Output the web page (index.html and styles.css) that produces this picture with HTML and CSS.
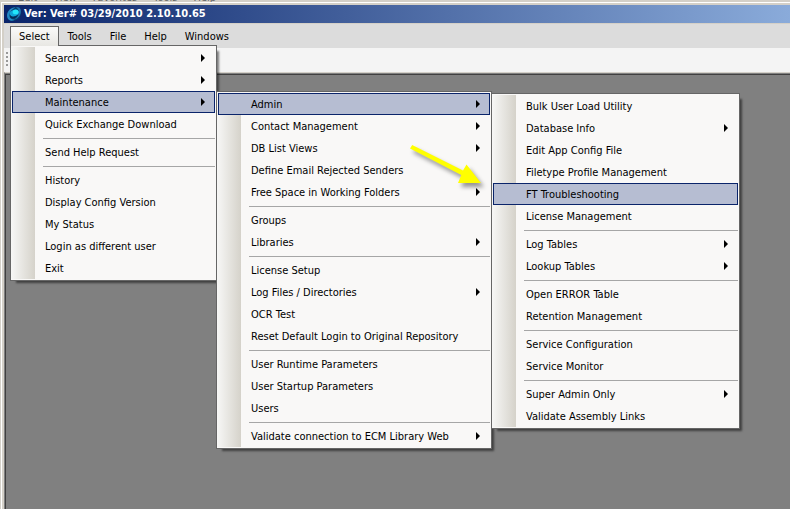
FILE: index.html
```html
<!DOCTYPE html>
<html lang="en">
<head>
<meta charset="utf-8">
<title>Ver: Ver# 03/29/2010 2.10.10.65</title>
<link rel="stylesheet" href="styles.css">
</head>
<body>
<div class="backdrop" aria-hidden="true"><span>Edit</span><span>View</span><span>Favorites</span><span>Tools</span><span>Help</span></div>
<div class="window">
  <header class="titlebar">
    <svg class="logo" viewBox="0 0 16 16" aria-hidden="true">
      <path d="M2 12C-0.500 7 4 1 10 1C8 2 15 0 15 5C16 10 12 15 6 15C4 15 2.500 14 2 12Z" fill="#08406f"/>
      <path d="M1.500 12C-0.500 7 4 1.500 9.500 1.300C5.500 3.500 3.200 6.500 3.500 10C3.800 12.500 6 14 9 13.500C6 15.500 3 15 1.500 12Z" fill="#2389c4"/>
      <path d="M10 1.500C13 0.500 15.200 2 14.800 6C14.500 9.500 12 12.500 8.500 13.500C11.500 11 13 8.500 13 6C13 4 12 2.500 10 1.500Z" fill="#1f78b4"/>
      <ellipse cx="8.300" cy="7" rx="4.600" ry="3.300" transform="rotate(-20 8.300 7)" fill="#0fa5d8"/>
      <ellipse cx="9.600" cy="6" rx="3" ry="2.300" fill="#22e6fa"/>
      <path d="M4 9.500C6 11.500 9.500 11 12 8.500C11 12 6.500 13.500 4.500 11.500Z" fill="#052a55"/>
    </svg>
    <h1 class="title">Ver: Ver# 03/29/2010 2.10.10.65</h1>
  </header>
  <nav class="menubar">
    <div class="slot">
      <button class="top open" type="button">Select</button>
      <ul class="menu menu-select">
        <li><button class="item sub" type="button">Search</button></li>
        <li><button class="item sub" type="button">Reports</button></li>
        <li class="parent"><button class="item sub active" type="button">Maintenance</button>
          <ul class="menu menu-maintenance">
            <li class="parent"><button class="item sub active" type="button">Admin</button>
              <ul class="menu menu-admin">
                <li><button class="item" type="button">Bulk User Load Utility</button></li>
                <li><button class="item sub" type="button">Database Info</button></li>
                <li><button class="item" type="button">Edit App Config File</button></li>
                <li><button class="item" type="button">Filetype Profile Management</button></li>
                <li><button class="item active" type="button">FT Troubleshooting</button></li>
                <li><button class="item" type="button">License Management</button></li>
                <li class="rule" role="separator"></li>
                <li><button class="item sub" type="button">Log Tables</button></li>
                <li><button class="item sub" type="button">Lookup Tables</button></li>
                <li class="rule" role="separator"></li>
                <li><button class="item" type="button">Open ERROR Table</button></li>
                <li><button class="item" type="button">Retention Management</button></li>
                <li class="rule" role="separator"></li>
                <li><button class="item" type="button">Service Configuration</button></li>
                <li><button class="item" type="button">Service Monitor</button></li>
                <li class="rule" role="separator"></li>
                <li><button class="item sub" type="button">Super Admin Only</button></li>
                <li><button class="item" type="button">Validate Assembly Links</button></li>
              </ul>
            </li>
            <li><button class="item sub" type="button">Contact Management</button></li>
            <li><button class="item sub" type="button">DB List Views</button></li>
            <li><button class="item" type="button">Define Email Rejected Senders</button></li>
            <li class="parent"><button class="item sub" type="button">Free Space in Working Folders</button>
              <svg class="pointer" viewBox="0 0 90 60" aria-hidden="true">
                <path d="M8.200 5L59 30.500L62.500 24.500L77 43L54 43L57.300 35L6 8.500Z" fill="#ffff00"/>
              </svg>
            </li>
            <li class="rule" role="separator"></li>
            <li><button class="item" type="button">Groups</button></li>
            <li><button class="item sub" type="button">Libraries</button></li>
            <li class="rule" role="separator"></li>
            <li><button class="item" type="button">License Setup</button></li>
            <li><button class="item sub" type="button">Log Files / Directories</button></li>
            <li><button class="item" type="button">OCR Test</button></li>
            <li><button class="item" type="button">Reset Default Login to Original Repository</button></li>
            <li class="rule" role="separator"></li>
            <li><button class="item" type="button">User Runtime Parameters</button></li>
            <li><button class="item" type="button">User Startup Parameters</button></li>
            <li><button class="item" type="button">Users</button></li>
            <li class="rule" role="separator"></li>
            <li><button class="item sub" type="button">Validate connection to ECM Library Web</button></li>
          </ul>
        </li>
        <li><button class="item" type="button">Quick Exchange Download</button></li>
        <li class="rule" role="separator"></li>
        <li><button class="item" type="button">Send Help Request</button></li>
        <li class="rule" role="separator"></li>
        <li><button class="item" type="button">History</button></li>
        <li><button class="item" type="button">Display Config Version</button></li>
        <li><button class="item" type="button">My Status</button></li>
        <li><button class="item" type="button">Login as different user</button></li>
        <li><button class="item" type="button">Exit</button></li>
      </ul>
    </div>
    <button class="top" type="button">Tools</button>
    <button class="top" type="button">File</button>
    <button class="top" type="button">Help</button>
    <button class="top" type="button">Windows</button>
  </nav>
  <div class="toolbar"><span class="grip"></span></div>
  <main class="workspace"></main>
</div>
</body>
</html>
```
FILE: styles.css
```css
* { box-sizing: border-box; }

body {
  margin: 0;
  min-height: 100vh;
  display: flex;
  flex-direction: column;
  overflow: hidden;
  background: #d4d0c8;
  font: 11px/14px Tahoma, "DejaVu Sans Condensed", "DejaVu Sans", sans-serif;
  color: #000;
}

button {
  font: inherit;
  color: inherit;
  border: 0;
  margin: 0;
  border-radius: 0;
  background: none;
  white-space: nowrap;
}

.backdrop {
  display: flex;
  align-items: flex-end;
  gap: 16px;
  height: 2px;
  padding-left: 18px;
  overflow: hidden;
  background: #d4d0c8;
  color: #666;
  line-height: 8px;
}

.window {
  flex: 1;
  display: flex;
  flex-direction: column;
  margin-left: 1px;
  border-top: 1px solid #fff;
  border-left: 1px solid #fff;
  padding: 2px 0 0 2px;
}

.titlebar {
  display: flex;
  align-items: center;
  gap: 2px;
  height: 18px;
  padding-left: 2px;
  background: linear-gradient(90deg, #0a246a, #8aabda);
}

.logo { width: 16px; height: 16px; }

.title {
  margin: 0;
  font-size: 11px;
  line-height: 16px;
  font-weight: bold;
  color: #fff;
}

.menubar {
  display: flex;
  height: 25px;
  padding: 2px 0 3px 6px;
  border-top: 1px solid #d4d0c8;
  background: #dcdcdc;
}

.slot { position: relative; display: flex; }

.top { padding: 2px 8px 0; border: 1px solid transparent; }

/* Overlaps the menu's top border so that tab and menu join. */
.top.open {
  position: relative;
  z-index: 3;
  margin-bottom: -1px;
  padding-bottom: 1px;
  border-color: #666;
  border-bottom: 0;
  background: linear-gradient(#fafaf9, #e8e7e3);
}

.menu {
  position: absolute;
  z-index: 2;
  margin: 0;
  padding: 1px;
  list-style: none;
  border: 1px solid #666;
  background: linear-gradient(90deg, #f7f7f6, #d5d2ca) 0 1px / 24px calc(100% - 2px) no-repeat #f9f8f7;
  box-shadow: 4px 4px 2px -2px rgba(0, 0, 0, 0.5);
}

.menu-select { top: 100%; left: 0; width: 207px; }
.menu .menu { top: 0; left: calc(100% + 1px); }
.menu-maintenance { width: 276px; }
.menu-admin { width: 249px; }

.parent { position: relative; }

.item {
  position: relative;
  display: block;
  width: 100%;
  height: 22px;
  padding: 2px 10px 0 32px;
  border: 1px solid transparent;
  text-align: left;
}

.item.active { border-color: #0a246a; background: #b6bdd2; }

.sub::after {
  content: "";
  position: absolute;
  top: 6px;
  right: 9px;
  border: solid transparent;
  border-width: 4px 0 4px 4px;
  border-left-color: #000;
}

.rule { height: 6px; padding: 3px 0 2px 31px; }
.rule::before { content: ""; display: block; height: 1px; background: #a6a6a6; }

.pointer {
  position: absolute;
  z-index: 3;
  right: -4px;
  bottom: 3px;
  width: 90px;
  height: 60px;
  overflow: visible;
  filter: drop-shadow(3px 4px 2px rgba(0, 0, 0, 0.4));
}

.toolbar {
  height: 24px;
  padding: 4px 2px;
  background: #f4f4f4;
}

.grip {
  display: block;
  width: 2px;
  height: 14px;
  background: repeating-linear-gradient(#999 0 2px, transparent 2px 4px);
}

.workspace {
  flex: 1;
  border-top: 1px solid #d4d0c8;
  border-left: 1px solid #808080;
  background: #808080;
  box-shadow: inset 0 1px #808080, inset 1px 2px #404040;
}
```
